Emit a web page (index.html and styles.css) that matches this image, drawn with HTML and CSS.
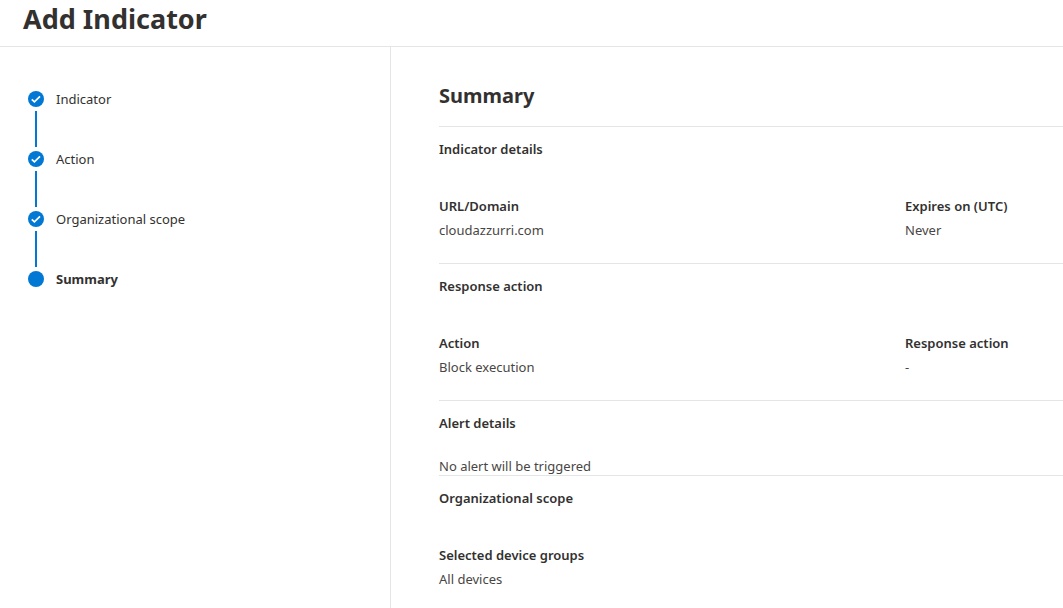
FILE: index.html
```html
<!DOCTYPE html>
<html lang="en">
  <head>
    <meta charset="UTF-8" />
    <meta name="viewport" content="width=device-width, initial-scale=1.0" />
    <title>Add Indicator</title>
    <link rel="stylesheet" href="styles.css">
  </head>
  <body>
    <header class="header">
      <h1>Add Indicator</h1>
    </header>
    <div class="container">
      <nav class="sidebar" aria-label="Wizard steps">
        <ol class="steps">
          <li class="step">
            <svg class="dot" viewBox="0 0 16 16" aria-hidden="true">
              <circle cx="8" cy="8" r="8" />
              <path d="M3.8 8.3l2.6 2.6 5.6-5.6" />
            </svg>
            <span>Indicator</span>
          </li>
          <li class="step">
            <svg class="dot" viewBox="0 0 16 16" aria-hidden="true">
              <circle cx="8" cy="8" r="8" />
              <path d="M3.8 8.3l2.6 2.6 5.6-5.6" />
            </svg>
            <span>Action</span>
          </li>
          <li class="step">
            <svg class="dot" viewBox="0 0 16 16" aria-hidden="true">
              <circle cx="8" cy="8" r="8" />
              <path d="M3.8 8.3l2.6 2.6 5.6-5.6" />
            </svg>
            <span>Organizational scope</span>
          </li>
          <li class="step current" aria-current="step">
            <svg class="dot" viewBox="0 0 16 16" aria-hidden="true">
              <circle cx="8" cy="8" r="8" />
            </svg>
            <span>Summary</span>
          </li>
        </ol>
      </nav>
      <main class="content">
        <h2>Summary</h2>
        <section class="section">
          <h3>Indicator details</h3>
          <dl class="details">
            <div>
              <dt>URL/Domain</dt>
              <dd>cloudazzurri.com</dd>
            </div>
            <div>
              <dt>Expires on (UTC)</dt>
              <dd>Never</dd>
            </div>
          </dl>
        </section>
        <section class="section">
          <h3>Response action</h3>
          <dl class="details">
            <div>
              <dt>Action</dt>
              <dd>Block execution</dd>
            </div>
            <div>
              <dt>Response action</dt>
              <dd>-</dd>
            </div>
          </dl>
        </section>
        <section class="section">
          <h3>Alert details</h3>
          <p class="note">No alert will be triggered</p>
        </section>
        <section class="section">
          <h3>Organizational scope</h3>
          <dl class="details">
            <div>
              <dt>Selected device groups</dt>
              <dd>All devices</dd>
            </div>
          </dl>
        </section>
      </main>
    </div>
  </body>
</html>
```
FILE: styles.css
```css
* {
  box-sizing: border-box;
}

body {
  display: flex;
  flex-direction: column;
  min-height: 100vh;
  margin: 0;
  background-color: white;
  color: #323130;
  font-family: "Segoe UI", "Noto Sans", sans-serif;
  font-size: 13px;
  line-height: 20px;
}

h1,
h2,
h3,
p,
dl,
dd {
  margin: 0;
}

.header {
  padding: 0 23px 8px;
  border-bottom: 1px solid #e5e5e5;
}

h1 {
  font-size: 27px;
  font-weight: 700;
  line-height: 38px;
}

.container {
  display: flex;
  flex: 1;
}

.sidebar {
  width: 391px;
  flex-shrink: 0;
  padding: 42px 28px;
  border-right: 1px solid #e5e5e5;
}

.steps {
  display: flex;
  flex-direction: column;
  margin: 0;
  padding: 0;
  list-style: none;
}

.step {
  display: grid;
  grid-template-columns: 16px 1fr;
  column-gap: 12px;
  align-items: center;
}

/* line joining a step to the next one */
.step:not(:last-child)::after {
  content: "";
  width: 2px;
  height: 36px;
  margin: 2px 7px;
  background-color: #0078d4;
}

.current {
  font-weight: 700;
}

.dot {
  width: 16px;
  height: 16px;
}

.dot circle {
  fill: #0078d4;
}

.dot path {
  fill: none;
  stroke: white;
  stroke-width: 1.7;
}

.content {
  flex: 1;
  min-width: 0;
  padding: 34px 0 18px 48px;
}

h2 {
  margin-bottom: 16px;
  font-size: 20px;
  font-weight: 700;
  line-height: 29px;
}

.section {
  border-top: 1px solid #e5e5e5;
  padding-top: 12px;
}

h3,
dt {
  font-size: 13px;
  font-weight: 600;
}

.details {
  display: grid;
  grid-template-columns: 1fr 158px;
  padding: 37px 0 23px;
}

dd,
.note {
  color: #484644;
}

dd {
  margin-top: 4px;
}

.note {
  margin-top: 24px;
  line-height: 18px;
}
```
